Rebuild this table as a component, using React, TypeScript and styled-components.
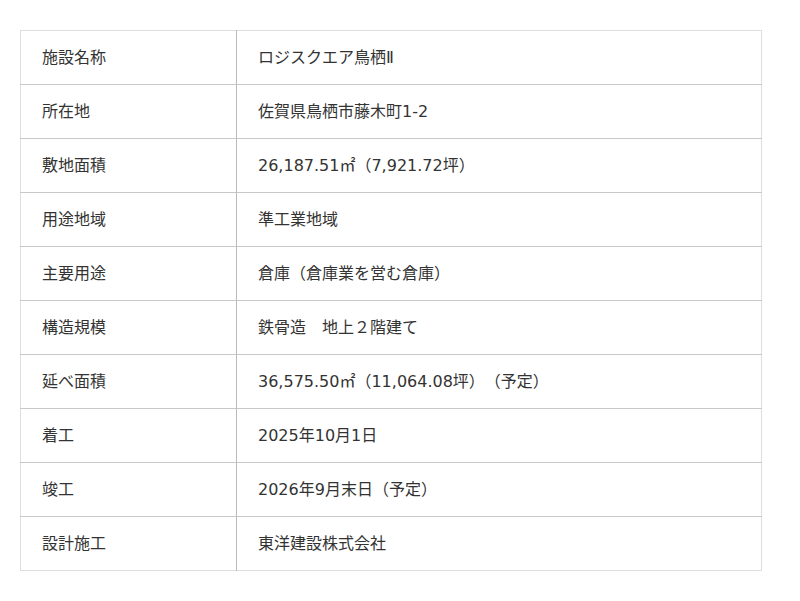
import { FC } from 'react';
import styled, { createGlobalStyle } from 'styled-components';

const GlobalStyle = createGlobalStyle`
  body {
    margin: 0;
    background: #fff;
    font-family: 'DejaVu Sans', 'Noto Sans CJK JP', sans-serif;
    color: #333;
    text-spacing-trim: space-all;
  }
`;

const Wrapper = styled.div`
  padding: 30px 0 0 20px;
`;

const Table = styled.table`
  width: 742px;
  border-collapse: collapse;
  border: 1px solid #ddd;
`;

const Row = styled.tr`
  border-bottom: 1px solid #c8c8c8;
  &:last-child {
    border-bottom: 1px solid #ddd;
  }
`;

const Th = styled.th`
  width: 216px;
  height: 54px;
  padding: 0 21px 4px;
  box-sizing: border-box;
  text-align: left;
  font-weight: normal;
  font-size: 16px;
  border-right: 1px solid #bbb;
`;

const Td = styled.td`
  padding: 0 21px 4px;
  font-size: 16px;
`;

const ROWS: [string, string][] = [
  ['施設名称', 'ロジスクエア鳥栖Ⅱ'],
  ['所在地', '佐賀県鳥栖市藤木町1-2'],
  ['敷地面積', '26,187.51㎡（7,921.72坪）'],
  ['用途地域', '準工業地域'],
  ['主要用途', '倉庫（倉庫業を営む倉庫）'],
  ['構造規模', '鉄骨造　地上２階建て'],
  ['延べ面積', '36,575.50㎡（11,064.08坪）（予定）'],
  ['着工', '2025年10月1日'],
  ['竣工', '2026年9月末日（予定）'],
  ['設計施工', '東洋建設株式会社'],
];

const App: FC = () => (
  <>
    <GlobalStyle />
    <Wrapper>
      <Table>
        <tbody>
          {ROWS.map(([label, value]) => (
            <Row key={label}>
              <Th>{label}</Th>
              <Td>{value}</Td>
            </Row>
          ))}
        </tbody>
      </Table>
    </Wrapper>
  </>
);

export default App;
